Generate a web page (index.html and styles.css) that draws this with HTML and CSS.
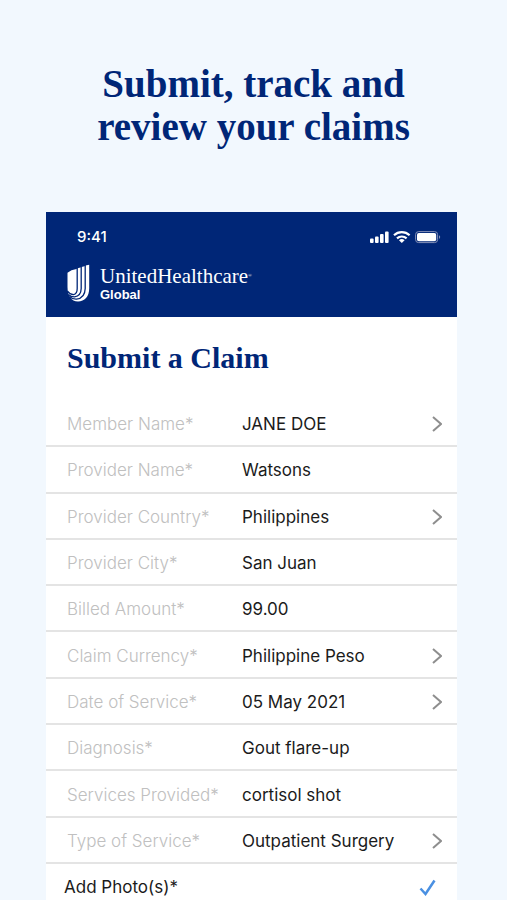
FILE: index.html
```html
<!DOCTYPE html>
<html lang="en">
<head>
<meta charset="utf-8">
<meta name="viewport" content="width=device-width, initial-scale=1">
<title>Submit a Claim</title>
<link rel="stylesheet" href="styles.css">
</head>
<body>
<h1 class="headline">Submit, track and<br>review your claims</h1>
<main class="phone">
  <header class="topbar">
    <div class="status">
      <span class="time">9:41</span>
      <svg class="signals" width="72" height="16" viewBox="0 0 72 16" fill="#fff" aria-hidden="true">
        <rect x="0" y="9.5" width="3.6" height="4.5" rx="1"/>
        <rect x="5" y="7.5" width="3.6" height="6.5" rx="1"/>
        <rect x="10" y="5" width="3.6" height="9" rx="1"/>
        <rect x="15" y="2.5" width="3.6" height="11.5" rx="1"/>
        <g fill="none" stroke="#fff" stroke-width="2.2">
          <path d="M24 6.200a11.500 11.500 0 0 1 15.600 0"/>
          <path d="M27 9.400a7 7 0 0 1 9.600 0"/>
        </g>
        <path d="M29 11.300a4.200 4.200 0 0 1 5.600 0L31.800 14z"/>
        <rect x="45.600" y="2.600" width="22" height="11" rx="3" fill="none" stroke="#8591b9"/>
        <rect x="47" y="4" width="19.200" height="8.200" rx="1.800"/>
        <path d="M69 6.300v3.600c1.600-.6 1.600-3 0-3.600z" fill="#8591b9"/>
      </svg>
    </div>
    <div class="brand">
      <svg class="mark" width="23" height="38" viewBox="0 0 23 38" aria-hidden="true">
        <path fill="#fff" d="M.5 8.800Q4 5.800 9.500 5L10.500 4.200 13.500 3.600 14.500 2.900 17.500 2.300 18.500 1.600 22.200.8V24.500C22.200 32.500 17.500 37.500 11 37.500C7.500 37.500 5 36 3.500 33.500Q.5 30.500 .5 23z"/>
        <g fill="none" stroke="#002677" stroke-width="1.300">
          <path d="M10.200 3V24.500Q10.200 30 6.500 30.600Q3 30.600 .5 27"/>
          <path d="M14.200 2V24.500Q14 32 7.500 32.900Q4 33 1.500 30.500"/>
          <path d="M18.200 1V24.500Q18 34 9.500 35.200Q5.500 35.400 2.500 32.500"/>
        </g>
      </svg>
      <div class="wordmark">
        <span class="name">UnitedHealthcare<span class="reg">®</span></span>
        <span class="division">Global</span>
      </div>
    </div>
  </header>
  <form class="claim">
    <h2 class="title">Submit a Claim</h2>
    <div class="rows">
      <div class="row"><label for="member">Member Name*</label><button type="button" id="member">JANE DOE<svg class="chevron" viewBox="0 0 10 16"><path d="M1 1l8 7-8 7"/></svg></button></div>
      <div class="row"><label for="provider">Provider Name*</label><input id="provider" type="text" value="Watsons"></div>
      <div class="row"><label for="country">Provider Country*</label><button type="button" id="country">Philippines<svg class="chevron" viewBox="0 0 10 16"><path d="M1 1l8 7-8 7"/></svg></button></div>
      <div class="row"><label for="city">Provider City*</label><input id="city" type="text" value="San Juan"></div>
      <div class="row"><label for="amount">Billed Amount*</label><input id="amount" type="text" inputmode="decimal" value="99.00"></div>
      <div class="row"><label for="currency">Claim Currency*</label><button type="button" id="currency">Philippine Peso<svg class="chevron" viewBox="0 0 10 16"><path d="M1 1l8 7-8 7"/></svg></button></div>
      <div class="row"><label for="date">Date of Service*</label><button type="button" id="date">05 May 2021<svg class="chevron" viewBox="0 0 10 16"><path d="M1 1l8 7-8 7"/></svg></button></div>
      <div class="row"><label for="diagnosis">Diagnosis*</label><input id="diagnosis" type="text" value="Gout flare-up"></div>
      <div class="row"><label for="services">Services Provided*</label><input id="services" type="text" value="cortisol shot"></div>
      <div class="row"><label for="type">Type of Service*</label><button type="button" id="type">Outpatient Surgery<svg class="chevron" viewBox="0 0 10 16"><path d="M1 1l8 7-8 7"/></svg></button></div>
    </div>
    <label class="photos">
      <span>Add Photo(s)*</span>
      <input type="checkbox" class="photos-box" checked>
      <svg class="tick" width="17" height="17" viewBox="0 0 17 17" aria-hidden="true"><path d="M1.500 9.500l5 5.500L15.500 1.500"/></svg>
    </label>
  </form>
</main>
</body>
</html>
```
FILE: styles.css
```css
* { box-sizing: border-box; }

body {
  margin: 0;
  min-height: 100vh;
  display: flex;
  flex-direction: column;
  background: #f2f8fe;
  color: #1b1b1b;
  font-family: Inter, "Liberation Sans", sans-serif;
  font-size: 17px;
  line-height: 22px;
}

.headline {
  margin: 0;
  padding: 62px 0 64px;
  color: #002677;
  font: bold 39px/43px "Liberation Serif", serif;
  text-align: center;
}

.phone {
  flex: 1;
  display: flex;
  flex-direction: column;
  margin: 0 50px 0 46px;
  background: #fff;
}

.topbar {
  padding: 16px 15px 15px 21px;
  background: #002677;
  color: #fff;
}

.status {
  display: flex;
  align-items: center;
  justify-content: space-between;
  height: 18px;
  padding-left: 10px;
}

.time {
  font-size: 15px;
  font-weight: 500;
}

.brand {
  display: flex;
  gap: 10px;
  margin-top: 18px;
}

.wordmark {
  display: flex;
  flex-direction: column;
}

.name {
  font: 21px/24px "Liberation Serif", serif;
}

.reg {
  font-size: 5px;
  vertical-align: 6px;
}

.division {
  font: bold 13px/13px "Liberation Sans", sans-serif;
}

.claim {
  flex: 1;
  display: flex;
  flex-direction: column;
}

.title {
  margin: 0;
  padding: 24px 21px;
  padding-bottom: 26px;
  color: #002677;
  font: bold 30px/34px "Liberation Serif", serif;
}

.rows {
  display: grid;
  grid-auto-rows: 1fr;
  min-height: 463px;
}

.row {
  display: grid;
  grid-template-columns: 175px 1fr;
  align-items: center;
  padding: 2px 15px 0 21px;
  border-bottom: 2px solid #e4e4e4;
}

.row label {
  color: #c0c0c0;
  font-weight: 300;
}

.row input,
.row button {
  width: 100%;
  padding: 0;
  border: 0;
  background: none;
  color: inherit;
  font: inherit;
  text-align: left;
}

.row button {
  display: flex;
  align-items: center;
  justify-content: space-between;
}

.chevron {
  width: 10px;
  height: 16px;
  fill: none;
  stroke: #8e8e8e;
  stroke-width: 2;
}

.photos {
  flex: 1;
  display: flex;
  align-items: flex-start;
  padding: 12px 21px 0 18px;
}

.photos-box {
  appearance: none;
  flex: 1;
  height: 1px;
  margin: 0;
}

.tick {
  margin-top: 3px;
  visibility: hidden;
  fill: none;
  stroke: #4a90e2;
  stroke-width: 2.5;
}

.photos-box:checked + .tick { visibility: visible; }
```
